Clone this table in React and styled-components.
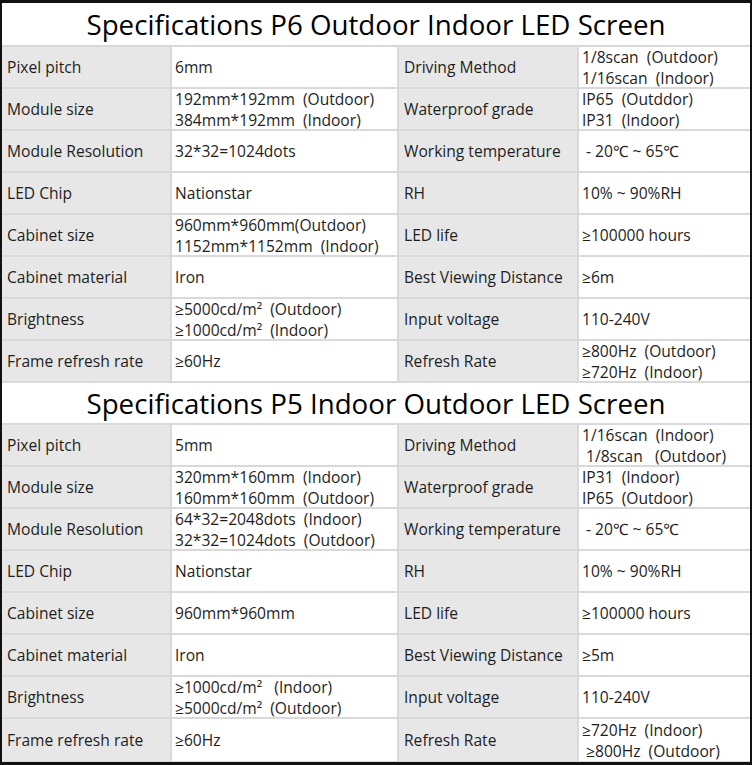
import React from 'react';
import styled, { createGlobalStyle } from 'styled-components';

const GlobalStyle = createGlobalStyle`
  html, body { margin: 0; padding: 0; background: #fff; }
  body { font-family: "Open Sans", "Noto Sans", sans-serif; }
`

const Sheet = styled.div`
  width: 752px;
  box-sizing: border-box;
  border-style: solid;
  border-color: #111;
  border-width: 3px 2px 3px 2px;
  background: #d9d9d9;
  display: grid;
  grid-template-columns: 168px 225px 178px 171px;
  column-gap: 2px;
  row-gap: 2px;
  padding-bottom: 1px;
`

const Title = styled.div`
  grid-column: 1 / -1;
  height: ${({ h }) => h}px;
  background: #fff;
  display: flex;
  align-items: center;
  justify-content: center;
  font-size: 27.7px;
  color: #000;
`

const Cell = styled.div`
  height: ${({ h }) => h}px;
  box-sizing: border-box;
  display: flex;
  flex-direction: column;
  justify-content: center;
  background: ${({ label }) => (label ? '#e7e7e7' : '#fff')};
  padding-left: ${({ label }) => (label ? '5px' : '3px')};
  padding-top: 1px;
  font-size: 15.6px;
  line-height: 20.5px;
  color: #1e1e1e;
  white-space: pre;
`

const p6 = [
  ['Pixel pitch', ['6mm'], 'Driving Method', ['1/8scan  (Outdoor)', '1/16scan  (Indoor)']],
  ['Module size', ['192mm*192mm  (Outdoor)', '384mm*192mm  (Indoor)'], 'Waterproof grade', ['IP65  (Outddor)', 'IP31  (Indoor)']],
  ['Module Resolution', ['32*32=1024dots'], 'Working temperature', [' - 20℃ ~ 65℃']],
  ['LED Chip', ['Nationstar'], 'RH', ['10% ~ 90%RH']],
  ['Cabinet size', ['960mm*960mm(Outdoor)', '1152mm*1152mm  (Indoor)'], 'LED life', ['≥100000 hours']],
  ['Cabinet material', ['Iron'], 'Best Viewing Distance', ['≥6m']],
  ['Brightness', ['≥5000cd/m²  (Outdoor)', '≥1000cd/m²  (Indoor)'], 'Input voltage', ['110-240V']],
  ['Frame refresh rate', ['≥60Hz'], 'Refresh Rate', ['≥800Hz  (Outdoor)', '≥720Hz  (Indoor)']],
]

const p5 = [
  ['Pixel pitch', ['5mm'], 'Driving Method', ['1/16scan  (Indoor)', ' 1/8scan   (Outdoor)']],
  ['Module size', ['320mm*160mm  (Indoor)', '160mm*160mm  (Outdoor)'], 'Waterproof grade', ['IP31  (Indoor)', 'IP65  (Outdoor)']],
  ['Module Resolution', ['64*32=2048dots  (Indoor)', '32*32=1024dots  (Outdoor)'], 'Working temperature', [' - 20℃ ~ 65℃']],
  ['LED Chip', ['Nationstar'], 'RH', ['10% ~ 90%RH']],
  ['Cabinet size', ['960mm*960mm'], 'LED life', ['≥100000 hours']],
  ['Cabinet material', ['Iron'], 'Best Viewing Distance', ['≥5m']],
  ['Brightness', ['≥1000cd/m²   (Indoor)', '≥5000cd/m²  (Outdoor)'], 'Input voltage', ['110-240V']],
  ['Frame refresh rate', ['≥60Hz'], 'Refresh Rate', ['≥720Hz  (Indoor)', ' ≥800Hz  (Outdoor)']],
]

const Lines = ({ lines }) => lines.map((l, i) => <span key={i}>{l}</span>)

const SpecRows = ({ rows, lastHeight }) =>
  rows.map(([a, b, c, d], i) => {
    const h = i === rows.length - 1 && lastHeight ? lastHeight : 40
    return (
      <React.Fragment key={a}>
        <Cell label h={h}>{a}</Cell>
        <Cell h={h}><Lines lines={b} /></Cell>
        <Cell label h={h}>{c}</Cell>
        <Cell h={h}><Lines lines={d} /></Cell>
      </React.Fragment>
    )
  })

export default function App() {
  return (
    <>
      <GlobalStyle />
      <Sheet>
        <Title h={42}>Specifications P6 Outdoor Indoor LED Screen</Title>
        <SpecRows rows={p6} />
        <Title h={40}>Specifications P5 Indoor Outdoor LED Screen</Title>
        <SpecRows rows={p5} lastHeight={42} />
      </Sheet>
    </>
  )
}
